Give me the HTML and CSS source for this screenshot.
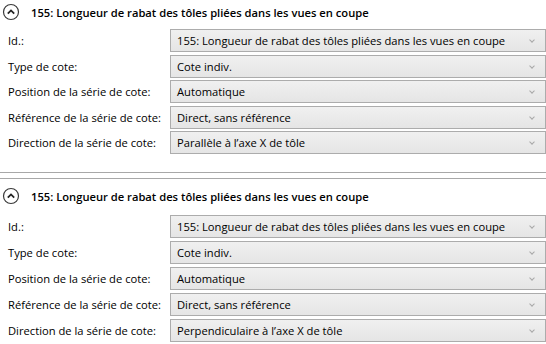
FILE: index.html
```html
<!DOCTYPE html>
<html lang="fr">
<head>
  <meta charset="UTF-8" />
  <title>Séries de cotes</title>
  <link rel="stylesheet" href="styles.css">
</head>
<body>
  <div class="section">
    <div class="section-head">
      <svg class="toggle" width="18" height="18" viewBox="0 0 18 18">
        <circle cx="9" cy="9" r="7.5" fill="none" stroke="#3a3a3a" stroke-width="1.2"/>
        <path d="M5.8 10.6 L9 7.4 L12.2 10.6" fill="none" stroke="#222" stroke-width="1.8"/>
      </svg>
      <span class="title">155: Longueur de rabat des tôles pliées dans les vues en coupe</span>
    </div>
    <div class="rows">
      <div class="row"><label>Id.:</label><div class="combo">155: Longueur de rabat des tôles pliées dans les vues en coupe<span class="arrow"></span></div></div>
      <div class="row"><label>Type de cote:</label><div class="combo">Cote indiv.<span class="arrow"></span></div></div>
      <div class="row"><label>Position de la série de cote:</label><div class="combo">Automatique<span class="arrow"></span></div></div>
      <div class="row"><label>Référence de la série de cote:</label><div class="combo">Direct, sans référence<span class="arrow"></span></div></div>
      <div class="row"><label>Direction de la série de cote:</label><div class="combo">Parallèle à l’axe X de tôle<span class="arrow"></span></div></div>
    </div>
  </div>

  <div class="section second">
    <div class="section-head">
      <svg class="toggle" width="18" height="18" viewBox="0 0 18 18">
        <circle cx="9" cy="9" r="7.5" fill="none" stroke="#3a3a3a" stroke-width="1.2"/>
        <path d="M5.8 10.6 L9 7.4 L12.2 10.6" fill="none" stroke="#222" stroke-width="1.8"/>
      </svg>
      <span class="title">155: Longueur de rabat des tôles pliées dans les vues en coupe</span>
    </div>
    <div class="rows">
      <div class="row"><label>Id.:</label><div class="combo">155: Longueur de rabat des tôles pliées dans les vues en coupe<span class="arrow"></span></div></div>
      <div class="row"><label>Type de cote:</label><div class="combo">Cote indiv.<span class="arrow"></span></div></div>
      <div class="row"><label>Position de la série de cote:</label><div class="combo">Automatique<span class="arrow"></span></div></div>
      <div class="row"><label>Référence de la série de cote:</label><div class="combo">Direct, sans référence<span class="arrow"></span></div></div>
      <div class="row"><label>Direction de la série de cote:</label><div class="combo">Perpendiculaire à l’axe X de tôle<span class="arrow"></span></div></div>
    </div>
  </div>
</body>
</html>
```

FILE: styles.css
```css
* {
  margin: 0;
  padding: 0;
  box-sizing: border-box;
}

body {
  background: #ffffff;
  color: #000;
  font-family: "Open Sans", sans-serif;
  font-size: 11.2px;
  width: 546px;
}

.section {
  border-bottom: 1px solid #a8a8a8;
  padding-bottom: 18px;
}

.section.second {
  border-top: 1px solid #a8a8a8;
  border-bottom: none;
  margin-top: 5px;
  padding-bottom: 0;
}

.section-head {
  display: flex;
  align-items: center;
  height: 24px;
  padding-left: 2px;
}

.second .section-head {
  margin-top: 5px;
}

.toggle {
  flex: none;
}

.title {
  font-weight: 600;
  margin-left: 11px;
}

.rows {
  display: flex;
  flex-direction: column;
  gap: 2.5px;
  padding-top: 5px;
}

.second .rows {
  padding-top: 7px;
  gap: 3px;
}

.row {
  display: flex;
  align-items: center;
  height: 23px;
}

.row label {
  width: 170px;
  padding-left: 8px;
}

.combo {
  flex: 1;
  height: 23px;
  display: flex;
  align-items: center;
  padding-left: 6px;
  border: 1px solid #acacac;
  background: linear-gradient(#f0f0f0, #e5e5e5);
  position: relative;
}

.arrow {
  position: absolute;
  right: 11px;
  top: 8px;
  width: 4px;
  height: 4px;
  border-right: 1px solid #a8a8a8;
  border-bottom: 1px solid #a8a8a8;
  transform: rotate(45deg);
}
```
